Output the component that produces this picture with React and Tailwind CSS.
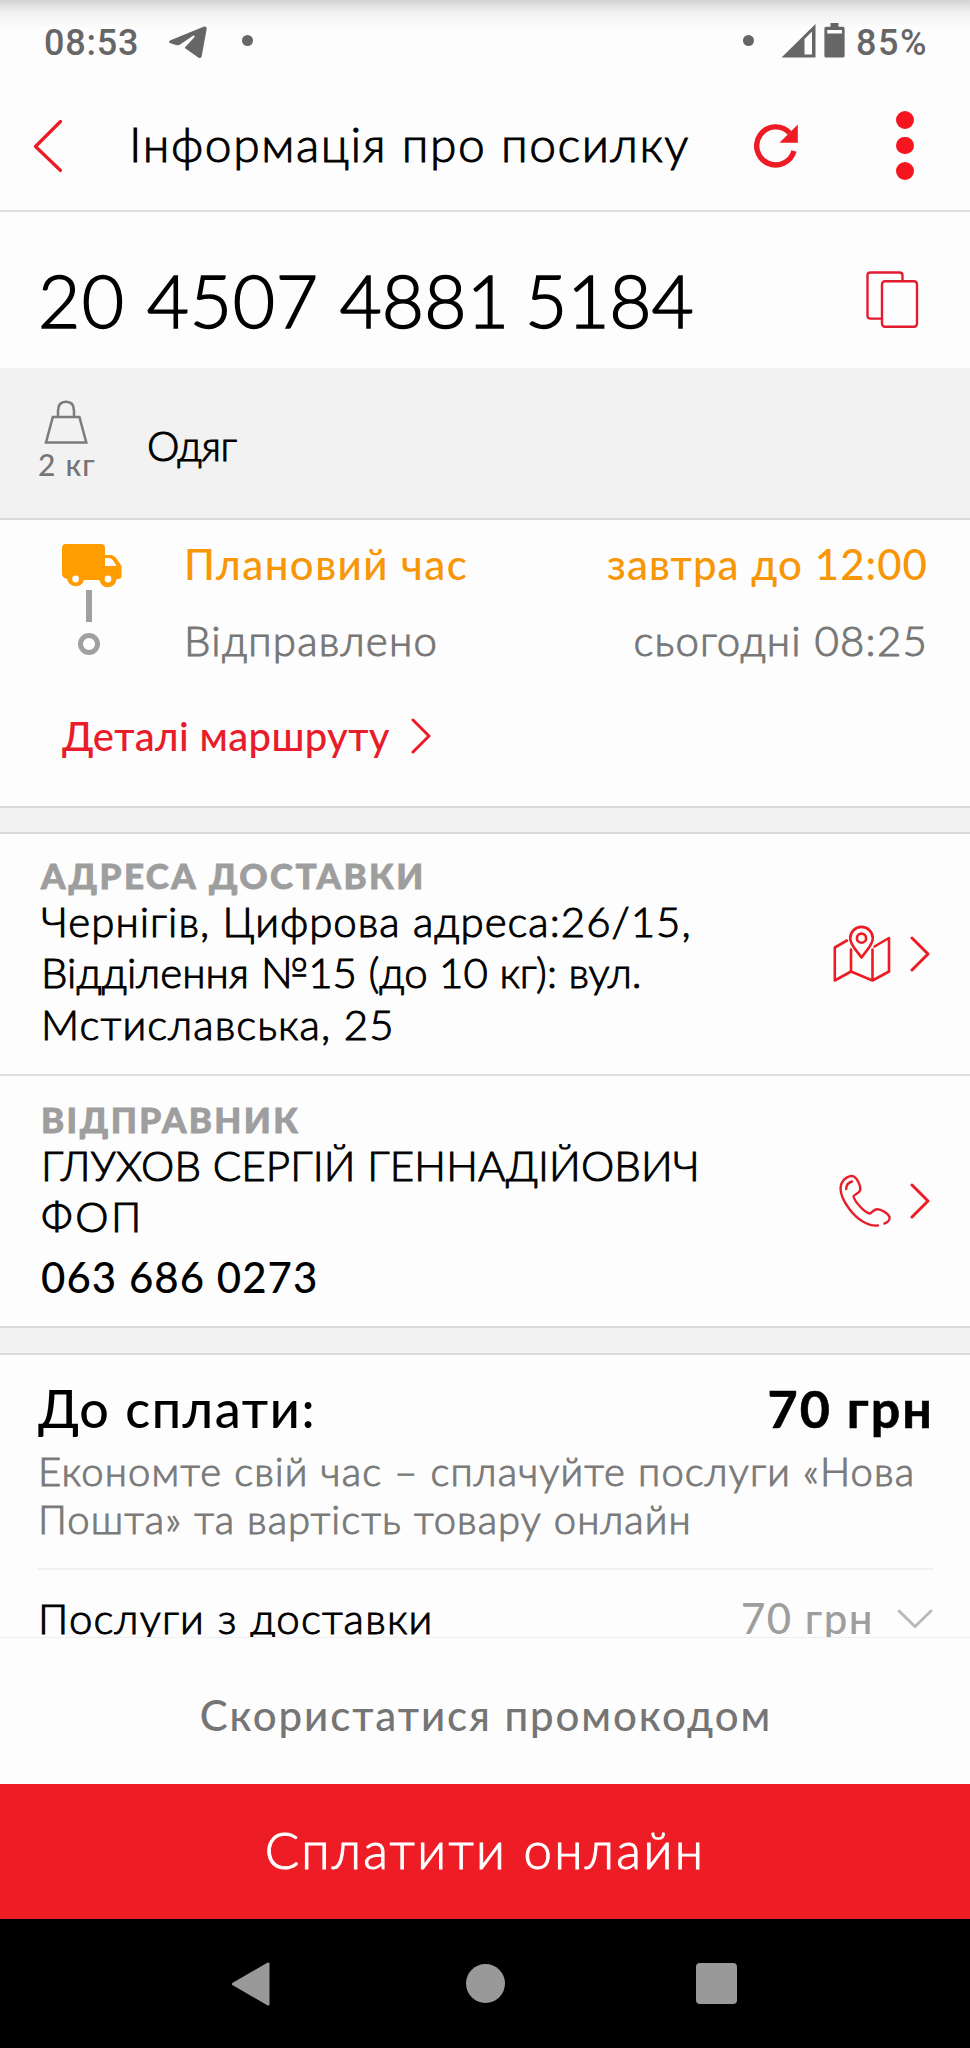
import React from 'react'

// Light text with a hair of extra weight
const light = "font-light [-webkit-text-stroke:1px_currentColor]"

const Chevron = () => (
    <svg width="20" height="36" viewBox="0 0 20 36" fill="none" stroke="#ed1c24" strokeWidth="3" strokeLinecap="round" strokeLinejoin="round">
        <path d="M2 2 L18 18 L2 34" />
    </svg>
)

const StatusBar = () => (
    <div className="h-20 pt-[5px] flex items-center justify-between pl-11 pr-[42px] bg-linear-to-b from-[#d2d2d2] via-[#f0f0f0] via-15% to-[#fdfdfd] to-35% text-[#666666] font-['Roboto',sans-serif] font-medium text-[36px]">
        <div className="flex items-center">
            <span className="tracking-[0.78px]">08:53</span>
            <svg className="ml-[30px]" width="38" height="34" viewBox="0 0 38 34" fill="#666666">
                <path d="M1.5 14.2 L34.5 0.8 C36.6 0 38 1 37.6 3.2 L32.8 29.8 C32.4 32 31 32.6 29.2 31.5 L16.5 22.6 C15.6 22 15.9 21.3 16.5 20.7 L25.4 11.2 C26 10.4 25.4 9 24 9.8 L11.5 18.2 C10 19.2 8.6 19.4 7 18.9 L1.6 17.2 C-0.4 16.5 -0.4 15 1.5 14.2 Z" />
            </svg>
            <span className="ml-[35px] mb-[4px] size-[11px] rounded-full bg-[#666666]"></span>
        </div>
        <div className="flex items-center">
            <span className="mb-[4px] size-[11px] rounded-full bg-[#666666]"></span>
            <svg className="ml-[27px] mb-[3px]" width="35" height="34" viewBox="0 0 35 34">
                <path fill="#666666" fillRule="evenodd" d="M0.5 33.5 L34.5 0 V33.5 Z M23.5 15 V30.5 H31 V7.5 Z" />
            </svg>
            <svg className="ml-2 mb-1" width="21" height="35" viewBox="0 0 21 35" fill="#666666">
                <path fillRule="evenodd" d="M6.5 0 H14.5 V3.8 H19 Q20.6 3.8 20.6 5.4 V33 Q20.6 34.6 19 34.6 H2 Q0.4 34.6 0.4 33 V5.4 Q0.4 3.8 2 3.8 H6.5 Z M3.2 7 V10.6 H18 V7 Z" />
            </svg>
            <span className="ml-[11px] tracking-[1.5px]">85%</span>
        </div>
    </div>
)

const Header = () => (
    <header className="h-[132px] flex items-center border-b-2 border-[#e0e0e0] pl-[33px]">
        <svg className="mt-[1px]" width="30" height="54" viewBox="0 0 30 54" fill="none" stroke="#ed1c24" strokeWidth="3.2" strokeLinecap="round" strokeLinejoin="round">
            <path d="M27.5 2.5 L2.5 27.5 L27.5 51.5" />
        </svg>
        <h1 className={`${light} ml-[66px] pb-0.5 text-[48px] tracking-[1.57px] whitespace-nowrap w-[600px]`}>Інформація про посилку</h1>
        <svg className="ml-[25px] mt-[1px]" width="44" height="44" viewBox="0 0 44 44">
            <path fill="none" stroke="#ed1c24" strokeWidth="5.4" d="M40 27 A19 19 0 1 1 35.5 8.8" />
            <path fill="#ed1c24" d="M43.8 0.5 V18.8 H25.5 Z" />
        </svg>
        <div className="ml-[98px] mt-[1px] flex flex-col gap-2">
            <span className="size-[17.5px] rounded-full bg-[#f5151f]"></span>
            <span className="size-[17.5px] rounded-full bg-[#f5151f]"></span>
            <span className="size-[17.5px] rounded-full bg-[#f5151f]"></span>
        </div>
    </header>
)

const ParcelNumber = () => (
    <div className="h-[156px] pl-[38px] pr-[51px] flex items-center justify-between">
        <div className="pt-[20px] text-[73px] leading-none font-light [-webkit-text-stroke:1.5px_currentColor] whitespace-nowrap">
            <span className="tracking-[1.4px]">20 </span>
            <span className="tracking-[0.7px]">4507 </span>
            <span className="tracking-[0.1px]">4881 </span>
            <span className="-ml-[4px] tracking-[-0.2px]">5184</span>
        </div>
        <svg className="mt-[20px]" width="53" height="58" viewBox="0 0 53 58" fill="none" stroke="#e31b30" strokeWidth="2.4">
            <path d="M15.5 47.6 H4.5 Q1.5 47.6 1.5 44.6 V4.5 Q1.5 1.5 4.5 1.5 H33.5 Q36.5 1.5 36.5 4.5 V10.3" />
            <rect x="16" y="10.3" width="35" height="45.5" rx="3" />
        </svg>
    </div>
)

const Cargo = () => (
    <div className="h-[152px] bg-[#f2f2f2] border-b-2 border-[#d9d9d9] flex">
        <div className="w-[147px] pl-[38px] pt-[32px]">
            <svg className="ml-[6px]" width="45" height="45" viewBox="0 0 45 45" fill="none" stroke="#7b7b7b" strokeWidth="2.5">
                <path d="M14 17 V11 Q14 1.8 22 1.8 Q30 1.8 30 11 V17" />
                <path d="M8.8 17 H35.4 L42.3 42.5 H2 Z" />
            </svg>
            <div className="mt-[4px] text-[30px] leading-[30px] font-medium tracking-[1.2px] text-[#757575]">2 кг</div>
        </div>
        <div className={`${light} self-center pt-[5px] text-[41px] tracking-[-0.4px]`}>Одяг</div>
    </div>
)

const Route = () => (
    <section className="h-[286px] pt-[6px] text-[42px]">
        <div className="flex">
            <div className="w-[184px] pl-[62px] pt-[18px]">
                <svg width="60" height="44" viewBox="0 0 60 44">
                    <path fill="#ff9c00" fillRule="evenodd" d="M4 0 H39 Q43 0 43 4 V11 H48 Q52 11 54.5 14.5 L58 19.5 Q59.5 21.5 59.5 24 V32 Q59.5 35 56.5 35 H54.5 A8.6 8.6 0 0 1 37.4 36 H22 A8.6 8.6 0 0 1 5.2 35 Q0 34 0 30 V4 Q0 0 4 0 Z M43 14 V22 H54.5 L51.5 17 Q49.8 14 47 14 Z M13.6 31.6 A3.4 3.4 0 1 0 13.6 38.4 A3.4 3.4 0 1 0 13.6 31.6 Z M46 31.6 A3.4 3.4 0 1 0 46 38.4 A3.4 3.4 0 1 0 46 31.6 Z" />
                </svg>
                <div className="ml-6 mt-[2px] w-[5.5px] h-8 bg-[#a0a0a0]"></div>
                <div className="ml-4 mt-[11px] size-[22px] rounded-full border-[5.5px] border-[#a0a0a0]"></div>
            </div>
            <div className="flex-1 pr-[42px]">
                <div className="h-[76px] leading-[76px] flex justify-between text-[#f79708] font-medium">
                    <span className="tracking-[1.45px]">Плановий час</span>
                    <span className="tracking-[1.05px]">завтра до 12:00</span>
                </div>
                <div className={`${light} h-[76px] leading-[76px] flex justify-between text-[#777777]`}>
                    <span className="tracking-[1.25px]">Відправлено</span>
                    <span className="tracking-[1.2px]">сьогодні 08:25</span>
                </div>
            </div>
        </div>
        <div className="mt-[20px] h-[76px] flex items-center pl-[62px] text-[#e81c2a]">
            <span className="text-[40px] font-medium tracking-[0.37px] w-[349px]">Деталі маршруту</span>
            <Chevron />
        </div>
    </section>
)

const InfoBlock = ({ title, children, icon, className, textClass }) => (
    <section className={`flex items-center pl-[41px] pr-[40px] ${className}`}>
        <div className={`flex-1 self-start ${textClass}`}>
            <h2 className="text-[35px] leading-[42px] font-black [-webkit-text-stroke:0.8px_currentColor] text-[#9e9e9e] tracking-[2.4px]">{title}</h2>
            {children}
        </div>
        {icon}
        <Chevron />
    </section>
)

const MapIcon = () => (
    <svg className="mr-[19px]" width="58" height="58" viewBox="0 0 58 58" fill="none" stroke="#ed1c24" strokeWidth="2.6" strokeLinejoin="round" strokeLinecap="round">
        <path d="M14 15.5 L1.8 22.5 V55.5 L18 46.5 L39.5 55.5 L56 46.5 V13 L41.5 21.5" />
        <path d="M18 24.5 V46.5 M39.5 24.5 V55" />
        <path d="M28.5 32.5 C24 26 17.2 20 17.2 13.2 A11.3 11.3 0 0 1 39.8 13.2 C39.8 20 33 26 28.5 32.5 Z" />
        <circle cx="28.5" cy="13.2" r="4.6" />
    </svg>
)

const PhoneIcon = () => (
    <svg className="mr-[19px]" width="52" height="54" viewBox="0 0 52 54" fill="none" stroke="#e5202c" strokeWidth="2.4" strokeLinecap="round" strokeLinejoin="round">
        <path d="M39 51.5 C29 52.5 18 45.5 10 34.5 C3 25 0 16 2.5 9.5 C4.5 4.5 11 0.5 15 2.5 C18.5 4.5 21.5 11.5 21.3 15.5 C21 19.5 14.5 20.5 14.5 22.5 C16 28 25 38 30.5 39.5 C32.5 39.8 34 35.5 38 35.2 C42 35 49.5 39.5 50.5 43 C51 46 48.5 48.5 45.5 49.5" />
        <path d="M7.2 15 C7.2 11.5 9.5 8.5 13 7.5" />
    </svg>
)

const Payment = () => (
    <section className="h-[282px] overflow-hidden pl-[38px] pr-[37px] pt-[23px]">
        <div className="flex justify-between text-[52px] leading-[60px]">
            <span className="font-medium tracking-[1.6px]">До сплати:</span>
            <span className="font-bold -mr-[1px] tracking-[2.1px] [-webkit-text-stroke:0.6px_currentColor]">70 грн</span>
        </div>
        <div className={`${light} mt-[9px] text-[40px] leading-[48.3px] text-[#7a7a7a] whitespace-nowrap`}>
            <div className="tracking-[1.12px]">Економте свій час – сплачуйте послуги «Нова</div>
            <div className="tracking-[1.06px]">Пошта» та вартість товару онлайн</div>
        </div>
        <div className="mt-6 h-0.5 bg-[#f0f0f0]"></div>
        <div className="mt-[18px] flex items-center text-[42px] leading-[60px] whitespace-nowrap">
            <span className={`${light} flex-1 tracking-[1.2px]`}>Послуги з доставки</span>
            <span className="font-medium text-[#9e9e9e] tracking-[1.5px]">70 грн</span>
            <svg className="ml-[23px] mt-[2px]" width="36" height="20" viewBox="0 0 36 20" fill="none" stroke="#b8b8b8" strokeWidth="2.8" strokeLinecap="round">
                <path d="M2 2 L18 17.5 L34 2" />
            </svg>
        </div>
    </section>
)

const NavBar = () => (
    <div className="h-[129px] bg-black flex items-center pl-[231px]">
        <svg width="39" height="44" viewBox="0 0 39 44">
            <path fill="#999999" stroke="#999999" strokeWidth="3" strokeLinejoin="round" d="M2.5 22 L37 2 V42 Z" />
        </svg>
        <span className="ml-[196px] size-[39px] rounded-full bg-[#999999]"></span>
        <span className="ml-[191px] size-[41px] rounded-[4px] bg-[#999999]"></span>
    </div>
)

const App = () => {
    return (
        <div className="w-[970px] h-[2048px] overflow-hidden bg-[#fdfdfd] text-black font-['Lato',sans-serif] flex flex-col">
            <StatusBar />
            <Header />
            <ParcelNumber />
            <Cargo />
            <Route />
            <div className="h-[28px] bg-[#f2f2f2] border-y-2 border-[#d9d9d9]"></div>

            <InfoBlock title="АДРЕСА ДОСТАВКИ" icon={<MapIcon />} className="h-[242px] border-b-2 border-[#dedede]" textClass="pt-[20px]">
                <div className={`${light} text-[42px] leading-[51.3px] whitespace-nowrap`}>
                    <div className="tracking-[1px]">Чернігів, Цифрова адреса:26/15,</div>
                    <div className="tracking-[0.05px]">Відділення №15 (до 10 кг): вул.</div>
                    <div className="tracking-[1.1px]">Мстиславська, 25</div>
                </div>
            </InfoBlock>

            <InfoBlock title="ВІДПРАВНИК" icon={<PhoneIcon />} className="h-[250px]" textClass="pt-[22px]">
                <div className={`${light} text-[42px] leading-[51.3px] whitespace-nowrap`}>
                    <div className="tracking-[0.15px]">ГЛУХОВ СЕРГІЙ ГЕННАДІЙОВИЧ</div>
                    <div className="tracking-[2.5px]">ФОП</div>
                </div>
                <div className="mt-[9px] text-[42px] leading-[51px] font-medium tracking-[1.05px]">063 686 0273</div>
            </InfoBlock>

            <div className="h-[29px] bg-[#f2f2f2] border-y-2 border-[#dadada]"></div>
            <Payment />

            {/* Bottom actions */}
            <div className="h-[147px] pt-[8px] border-t border-[#efefef] flex items-center justify-center text-[42px] text-[#757575] font-medium">
                <span className="pl-[2px] tracking-[1.92px]">Скористатися промокодом</span>
            </div>
            <button className={`${light} h-[135px] pb-[3px] bg-[#ee1c25] text-white text-[51px] tracking-[2.35px]`}>
                Сплатити онлайн
            </button>
            <NavBar />
        </div>
    )
}

export default App
